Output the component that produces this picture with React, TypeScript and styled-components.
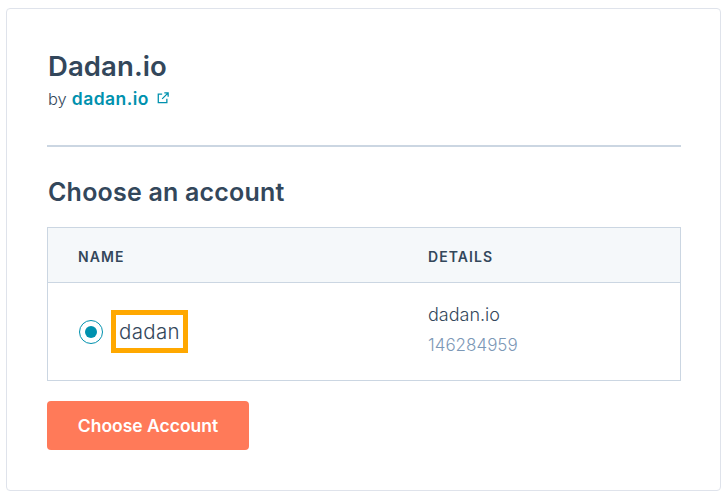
import React from "react";
import styled, { createGlobalStyle } from "styled-components";

const Global = createGlobalStyle`
  html, body { margin: 0; padding: 0; background: #fff; }
  body { width: 728px; height: 500px; overflow: hidden; font-family: "Inter", "Liberation Sans", sans-serif; color: #33475b; }
`;
const Page = styled.div`
  padding: 8px 7px 9px 6px;
  box-sizing: border-box;
  height: 500px;
`;
const Card = styled.main`
  box-sizing: border-box;
  height: 483px;
  border: 1px solid #dfe3eb;
  border-radius: 4px;
  padding: 39px 39px 0 40px;
`;
const Title = styled.h1`
  margin: 0;
  padding-left: 1px;
  font-size: 27.5px;
  line-height: 36px;
  font-weight: 600;
  letter-spacing: 0.1px;
  color: #33475b;
`;
const By = styled.div`
  font-size: 16.5px;
  line-height: 24px;
  margin-top: 3px;
  padding-left: 1px;
  display: flex;
  align-items: center;
  gap: 5px;
  font-weight: 300;
`;
const Link = styled.a`
  color: #0091ae;
  font-size: 17.5px;
  font-weight: 600;
  letter-spacing: 0.45px;
`;
const Icon = styled.svg`
  margin: -2px 0 0 3px;
`;
const Rule = styled.hr`
  margin: 34px 0 0;
  border: 0;
  border-top: 2px solid #cbd6e2;
`;
const Heading = styled.h2`
  margin: 29px 0 0;
  padding-left: 1px;
  font-size: 25px;
  line-height: 32px;
  font-weight: 600;
  letter-spacing: 0.2px;
`;
const Table = styled.div`
  margin-top: 19px;
  border: 1px solid #cbd6e2;
`;
const HeadRow = styled.div`
  box-sizing: border-box;
  display: grid;
  grid-template-columns: 350px 1fr;
  height: 55px;
  align-items: center;
  background: #f5f8fa;
  border-bottom: 1px solid #cbd6e2;
  padding: 3px 0 0 30px;
  font-size: 14px;
  font-weight: 600;
  letter-spacing: 1.05px;
`;
const BodyRow = styled.div`
  display: grid;
  grid-template-columns: 350px 1fr;
  height: 97px;
  align-items: center;
  padding-left: 31px;
`;
const NameCell = styled.div`
  display: flex;
  align-items: center;
  gap: 8px;
`;
const Radio = styled.span`
  box-sizing: border-box;
  width: 24px;
  height: 24px;
  border-radius: 50%;
  border: 1.5px solid #0091ae;
  display: flex;
  align-items: center;
  justify-content: center;
  &::after {
    content: "";
    width: 12px;
    height: 12px;
    border-radius: 50%;
    background: #0091ae;
  }
`;
const Highlight = styled.span`
  box-sizing: border-box;
  display: flex;
  align-items: center;
  justify-content: center;
  width: 77px;
  height: 43px;
  border: 5px solid #ffa800;
  font-size: 20.5px;
  letter-spacing: 0.3px;
  font-weight: 300;
`;
const Details = styled.div`
  font-size: 18px;
  line-height: 31px;
  font-weight: 300;
  margin: -3px 0 0 -1px;
`;
const Muted = styled.div`
  color: #7c98b6;
  font-size: 17px;
`;
const Button = styled.button`
  margin-top: 20px;
  width: 202px;
  height: 49px;
  border: 0;
  border-radius: 4px;
  background: #ff7a59;
  color: #fff;
  font: 600 17.5px "Inter", sans-serif;
`;

export default function App() {
  return (
    <Page>
      <Global />
      <Card>
        <Title>Dadan.io</Title>
        <By>
          by <Link>dadan.io</Link>
          <Icon width="12" height="12" viewBox="0 0 14 14" fill="none" stroke="#0091ae" strokeWidth="1.5">
            <path d="M6 2.5H1.5v10h10V8M8.5 1h4.5v4.5M13 1L6 8" />
          </Icon>
        </By>
        <Rule />
        <Heading>Choose an account</Heading>
        <Table>
          <HeadRow>
            <div>NAME</div>
            <div>DETAILS</div>
          </HeadRow>
          <BodyRow>
            <NameCell>
              <Radio />
              <Highlight>dadan</Highlight>
            </NameCell>
            <Details>
              <div>dadan.io</div>
              <Muted>146284959</Muted>
            </Details>
          </BodyRow>
        </Table>
        <Button>Choose Account</Button>
      </Card>
    </Page>
  );
}
